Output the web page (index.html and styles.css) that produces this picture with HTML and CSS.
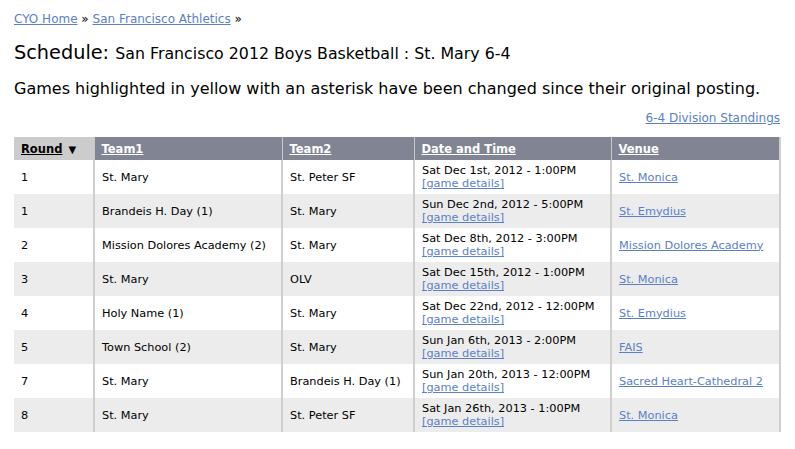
FILE: index.html
```html
<!DOCTYPE html>
<html>
<head>
<meta charset="utf-8">
<link rel="stylesheet" href="styles.css">
</head>
<body>
<div class="page">
  <div class="crumbs"><a href="#">CYO Home</a> » <a href="#">San Francisco Athletics</a> »</div>
  <h1 class="title">Schedule: <span class="sub">San Francisco 2012 Boys Basketball : St. Mary 6-4</span></h1>
  <p class="note">Games highlighted in yellow with an asterisk have been changed since their original posting.</p>
  <div class="standings"><a href="#">6-4 Division Standings</a></div>
  <table class="sched">
    <colgroup>
      <col class="c-round">
      <col class="c-t1">
      <col class="c-t2">
      <col class="c-date">
      <col class="c-venue">
    </colgroup>
    <thead>
      <tr>
        <th class="sorted"><a href="#">Round</a> <span class="arrow">▼</span></th>
        <th><a href="#">Team1</a></th>
        <th><a href="#">Team2</a></th>
        <th><a href="#">Date and Time</a></th>
        <th><a href="#">Venue</a></th>
      </tr>
    </thead>
    <tbody>
      <tr><td>1</td><td>St. Mary</td><td>St. Peter SF</td><td>Sat Dec 1st, 2012 - 1:00PM<br><a href="#">[game details]</a></td><td><a href="#">St. Monica</a></td></tr>
      <tr><td>1</td><td>Brandeis H. Day (1)</td><td>St. Mary</td><td>Sun Dec 2nd, 2012 - 5:00PM<br><a href="#">[game details]</a></td><td><a href="#">St. Emydius</a></td></tr>
      <tr><td>2</td><td>Mission Dolores Academy (2)</td><td>St. Mary</td><td>Sat Dec 8th, 2012 - 3:00PM<br><a href="#">[game details]</a></td><td><a href="#">Mission Dolores Academy</a></td></tr>
      <tr><td>3</td><td>St. Mary</td><td>OLV</td><td>Sat Dec 15th, 2012 - 1:00PM<br><a href="#">[game details]</a></td><td><a href="#">St. Monica</a></td></tr>
      <tr><td>4</td><td>Holy Name (1)</td><td>St. Mary</td><td>Sat Dec 22nd, 2012 - 12:00PM<br><a href="#">[game details]</a></td><td><a href="#">St. Emydius</a></td></tr>
      <tr><td>5</td><td>Town School (2)</td><td>St. Mary</td><td>Sun Jan 6th, 2013 - 2:00PM<br><a href="#">[game details]</a></td><td><a href="#">FAIS</a></td></tr>
      <tr><td>7</td><td>St. Mary</td><td>Brandeis H. Day (1)</td><td>Sun Jan 20th, 2013 - 12:00PM<br><a href="#">[game details]</a></td><td><a href="#">Sacred Heart-Cathedral 2</a></td></tr>
      <tr><td>8</td><td>St. Mary</td><td>St. Peter SF</td><td>Sat Jan 26th, 2013 - 1:00PM<br><a href="#">[game details]</a></td><td><a href="#">St. Monica</a></td></tr>
    </tbody>
  </table>
</div>
</body>
</html>
```

FILE: styles.css
```css
html, body {
  margin: 0;
  padding: 0;
  background: #fff;
}
body {
  font-family: "DejaVu Sans", Verdana, sans-serif;
  color: #000;
}
a {
  color: #5b80c8;
}
.page {
  padding: 12px 15px 0 14px;
}
.crumbs {
  font-size: 12px;
  line-height: 15px;
}
.title {
  margin: 13px 0 0;
  font-size: 19.3px;
  font-weight: normal;
  line-height: 26px;
}
.title .sub {
  font-size: 15.8px;
}
.note {
  margin: 12px 0 0;
  font-size: 16px;
  line-height: 19px;
}
.standings {
  text-align: right;
  font-size: 12px;
  line-height: 15px;
  margin-top: 13px;
}
.sched {
  table-layout: fixed;
  width: 766px;
  margin-top: 11px;
  border-collapse: collapse;
  font-size: 11.3px;
  border-right: 2px solid #cfcfcf;
}
.c-round { width: 80px; }
.c-t1 { width: 188px; }
.c-t2 { width: 132px; }
.c-date { width: 197px; }
.c-venue { width: 169px; }
.sched th {
  background: #818593;
  text-align: left;
  height: 23px;
  padding: 0 7px;
  font-size: 11.5px;
  border-left: 1px solid #c8c8c8;
}
.sched th a {
  color: #fff;
}
.sched th.sorted {
  background: #cccccc;
  border-left: 0;
}
.sched th.sorted a {
  color: #000;
}
.arrow {
  font-size: 10px;
  margin-left: 2px;
}
.sched td {
  height: 34px;
  padding: 0 7px;
  vertical-align: middle;
  line-height: 13px;
  border-left: 2px solid #cfcfcf;
  white-space: nowrap;
}
.sched td:first-child {
  border-left: 0;
}
.sched tbody tr:nth-child(even) td {
  background: #ececec;
}
```
